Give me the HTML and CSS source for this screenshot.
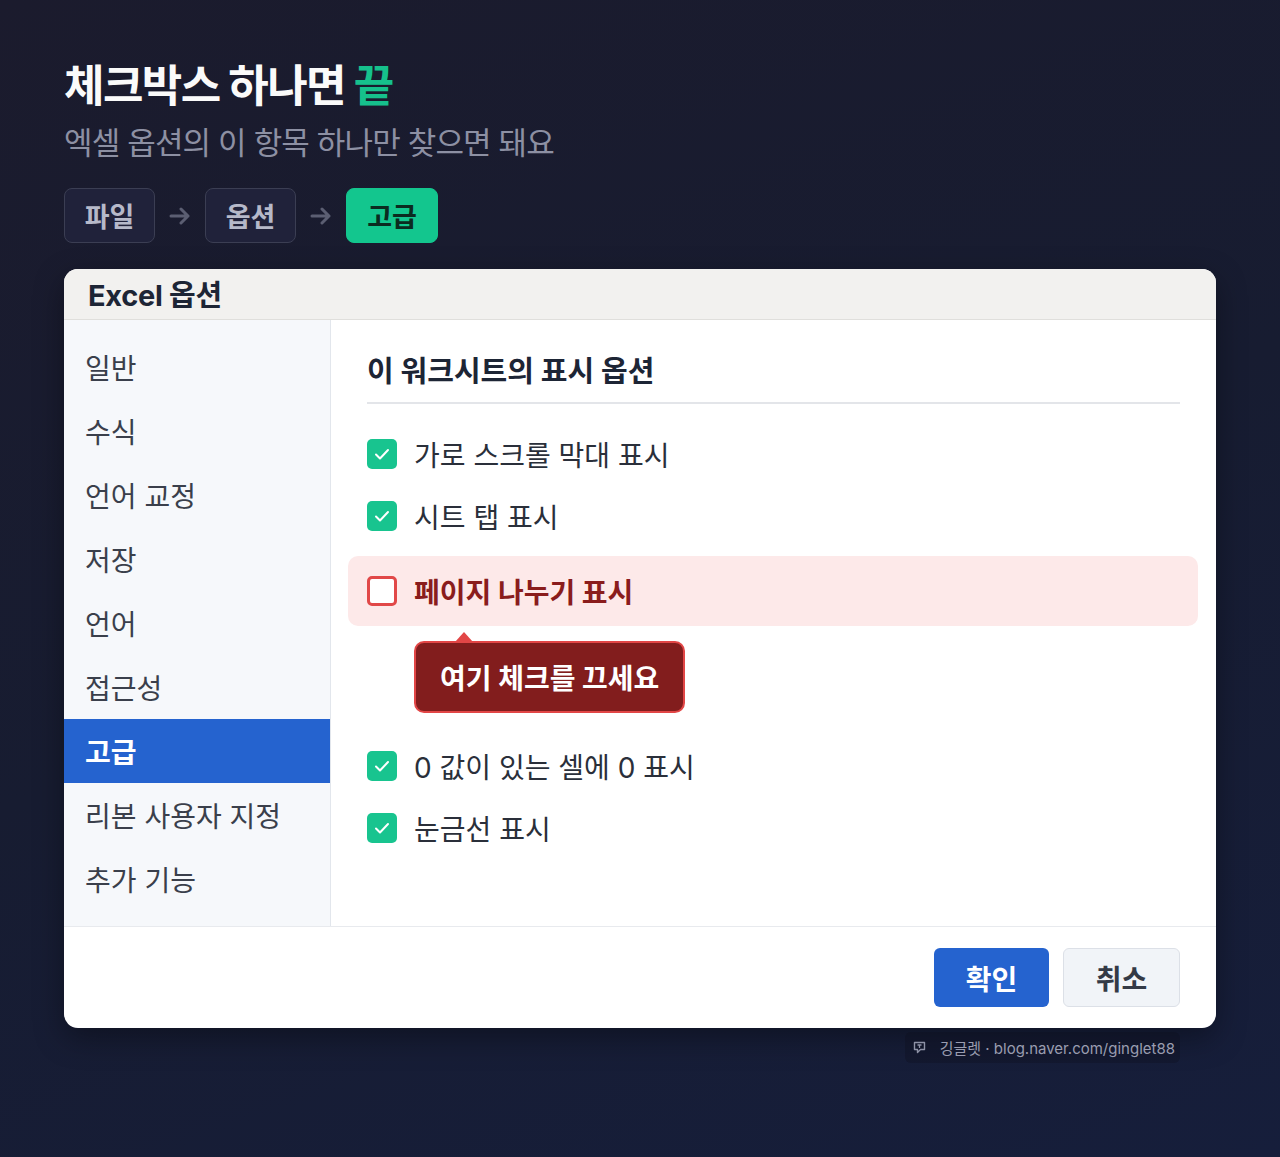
FILE: index.html
```html
<!DOCTYPE html>
<html lang="ko">
<head>
  <meta charset="UTF-8" />
  <meta name="viewport" content="width=device-width, initial-scale=1.0"/>
  <title>체크박스 하나면 끝</title>
  <link rel="stylesheet" href="styles.css">
</head>
<body>

  <div class="page">
    <h1 class="title">체크박스 하나면 <span class="accent">끝</span></h1>
    <p class="subtitle">엑셀 옵션의 이 항목 하나만 찾으면 돼요</p>

    <!-- Path: 파일 > 옵션 > 고급 -->
    <div class="crumbs">
      <span class="crumb">파일</span>
      <span class="arrow">
        <svg width="22" height="18" viewBox="0 0 22 18"><path d="M2 9h17M12 2l7 7-7 7" fill="none" stroke="#5b5e72" stroke-width="3" stroke-linecap="round" stroke-linejoin="round"/></svg>
      </span>
      <span class="crumb">옵션</span>
      <span class="arrow">
        <svg width="22" height="18" viewBox="0 0 22 18"><path d="M2 9h17M12 2l7 7-7 7" fill="none" stroke="#5b5e72" stroke-width="3" stroke-linecap="round" stroke-linejoin="round"/></svg>
      </span>
      <span class="crumb active">고급</span>
    </div>

    <div class="dialog">
      <div class="dialog-head">Excel 옵션</div>
      <div class="dialog-body">
        <ul class="side">
          <li>일반</li>
          <li>수식</li>
          <li>언어 교정</li>
          <li>저장</li>
          <li>언어</li>
          <li>접근성</li>
          <li class="current">고급</li>
          <li>리본 사용자 지정</li>
          <li>추가 기능</li>
        </ul>

        <div class="content">
          <h2 class="section">이 워크시트의 표시 옵션</h2>

          <div class="opt">
            <span class="box on"><svg width="16" height="12" viewBox="0 0 16 12"><path d="M2 6.5l4 4 8-8.5" fill="none" stroke="#fff" stroke-width="2" stroke-linecap="round" stroke-linejoin="round"/></svg></span>
            가로 스크롤 막대 표시
          </div>
          <div class="opt">
            <span class="box on"><svg width="16" height="12" viewBox="0 0 16 12"><path d="M2 6.5l4 4 8-8.5" fill="none" stroke="#fff" stroke-width="2" stroke-linecap="round" stroke-linejoin="round"/></svg></span>
            시트 탭 표시
          </div>
          <div class="opt warn">
            <span class="box off"></span>
            페이지 나누기 표시
          </div>
          <div class="tip-row">
            <div class="tip">여기 체크를 끄세요</div>
          </div>
          <div class="opt">
            <span class="box on"><svg width="16" height="12" viewBox="0 0 16 12"><path d="M2 6.5l4 4 8-8.5" fill="none" stroke="#fff" stroke-width="2" stroke-linecap="round" stroke-linejoin="round"/></svg></span>
            0 값이 있는 셀에 0 표시
          </div>
          <div class="opt">
            <span class="box on"><svg width="16" height="12" viewBox="0 0 16 12"><path d="M2 6.5l4 4 8-8.5" fill="none" stroke="#fff" stroke-width="2" stroke-linecap="round" stroke-linejoin="round"/></svg></span>
            눈금선 표시
          </div>
        </div>
      </div>
      <div class="dialog-foot">
        <button class="btn ok">확인</button>
        <button class="btn cancel">취소</button>
      </div>
    </div>

    <div class="credit">
      <span class="credit-box">
        <svg width="13" height="13" viewBox="0 0 13 13"><path d="M1.5 1.5h10v7h-4l-3 3v-3h-3z" fill="none" stroke="#8e92a6" stroke-width="1.4" stroke-linejoin="round"/><path d="M4.5 4h4M6.5 4v3" fill="none" stroke="#8e92a6" stroke-width="1.3"/></svg>
        깅글렛 · blog.naver.com/ginglet88
      </span>
    </div>
  </div>

</body>
</html>
```

FILE: styles.css
```css
body {
  margin: 0;
  height: 1157px;
  background: linear-gradient(160deg, #1b1b2d 0%, #171c31 50%, #161e3b 100%);
  font-family: Inter, "Noto Sans CJK KR", sans-serif;
  color: #fff;
}

.page {
  padding: 58px 64px 0;
}

.title {
  margin: 0;
  font-size: 44px;
  font-weight: 700;
  line-height: 56px;
  letter-spacing: -1.6px;
  color: #fafafa;
}

.accent {
  color: #16c08c;
}

.subtitle {
  margin: 8px 0 0;
  font-size: 31px;
  line-height: 42px;
  color: #8d90a3;
  letter-spacing: -0.85px;
}

.crumbs {
  display: flex;
  align-items: center;
  margin-top: 24px;
  gap: 14px;
}

.crumb {
  display: flex;
  align-items: center;
  justify-content: center;
  width: 91px;
  height: 55px;
  box-sizing: border-box;
  border: 1px solid #3b3e53;
  border-radius: 8px;
  background: #20223a;
  color: #b6b9c9;
  font-size: 27px;
  font-weight: 700;
}

.crumb.active {
  width: 92px;
  border-color: #13c68e;
  background: #13c68e;
  color: #0b2b20;
}

.arrow {
  display: flex;
  width: 22px;
}

.dialog {
  margin-top: 26px;
  width: 1152px;
  height: 759px;
  background: #fff;
  border-radius: 14px;
  overflow: hidden;
  display: flex;
  flex-direction: column;
  box-shadow: 0 10px 30px rgba(0, 0, 0, 0.35);
}

.dialog-head {
  height: 51px;
  flex: none;
  box-sizing: border-box;
  padding: 0 24px 3px;
  background: #f2f1ef;
  border-bottom: 1px solid #e0dfdc;
  display: flex;
  align-items: center;
  font-size: 29px;
  font-weight: 700;
  color: #1d2535;
  letter-spacing: -0.3px;
}

.dialog-body {
  display: flex;
  height: 606px;
  flex: none;
  border-bottom: 1px solid #e8eaee;
}

.side {
  list-style: none;
  margin: 0;
  padding: 15px 0 0;
  width: 266px;
  flex: none;
  background: #f6f8fb;
  border-right: 1px solid #e2e6ec;
}

.side li {
  height: 64px;
  display: flex;
  align-items: center;
  padding-left: 21px;
  font-size: 28px;
  color: #3a3f4b;
}

.side li.current {
  background: #2563cf;
  color: #fff;
  font-weight: 700;
}

.content {
  flex: 1;
  padding: 32px 36px 0;
}

.section {
  margin: 0;
  padding-bottom: 10px;
  border-bottom: 2px solid #e3e5e9;
  font-size: 29px;
  line-height: 40px;
  font-weight: 700;
  color: #1d2535;
}

.section + .opt {
  margin-top: 19px;
}

.opt {
  height: 62px;
  display: flex;
  align-items: center;
  gap: 17px;
  font-size: 28px;
  color: #2a2f3a;
}

.box {
  width: 30px;
  height: 30px;
  box-sizing: border-box;
  border-radius: 5px;
  flex: none;
  display: flex;
  align-items: center;
  justify-content: center;
}

.box.on {
  background: #18c48f;
}

.box.off {
  border: 3px solid #e14848;
  background: #fff;
}

.opt.warn {
  height: 70px;
  margin: 9px -18px 0 -19px;
  padding-left: 19px;
  border-radius: 10px;
  background: #fde9e9;
  font-weight: 700;
  color: #8a1c1c;
}

.tip-row {
  padding: 15px 0 22px 47px;
}

.tip {
  position: relative;
  display: inline-flex;
  align-items: center;
  height: 72px;
  box-sizing: border-box;
  padding: 0 24px;
  background: #821d1d;
  border: 2px solid #e24646;
  border-radius: 10px;
  font-size: 28px;
  font-weight: 700;
  color: #fff;
}

.tip::before {
  content: "";
  position: absolute;
  left: 39px;
  top: -11px;
  border: 9px solid transparent;
  border-top: 0;
  border-bottom: 10px solid #e24646;
}

.dialog-foot {
  flex: 1;
  display: flex;
  justify-content: flex-end;
  align-items: flex-start;
  gap: 14px;
  padding: 21px 36px 0;
}

.btn {
  height: 59px;
  width: 115px;
  border-radius: 6px;
  font-family: inherit;
  font-size: 28px;
  font-weight: 700;
  cursor: pointer;
}

.btn.ok {
  background: #2563cf;
  border: none;
  color: #fff;
}

.btn.cancel {
  width: 117px;
  background: #f1f4f8;
  border: 1px solid #dce0e7;
  color: #343a46;
}

.credit {
  display: flex;
  justify-content: flex-end;
  margin-top: 4px;
  padding-right: 36px;
}

.credit-box {
  display: flex;
  align-items: center;
  gap: 14px;
  padding: 5px 5px 5px 8px;
  border-radius: 6px;
  background: rgba(12, 14, 26, 0.3);
  font-size: 15px;
  color: #9a9db0;
}
```
